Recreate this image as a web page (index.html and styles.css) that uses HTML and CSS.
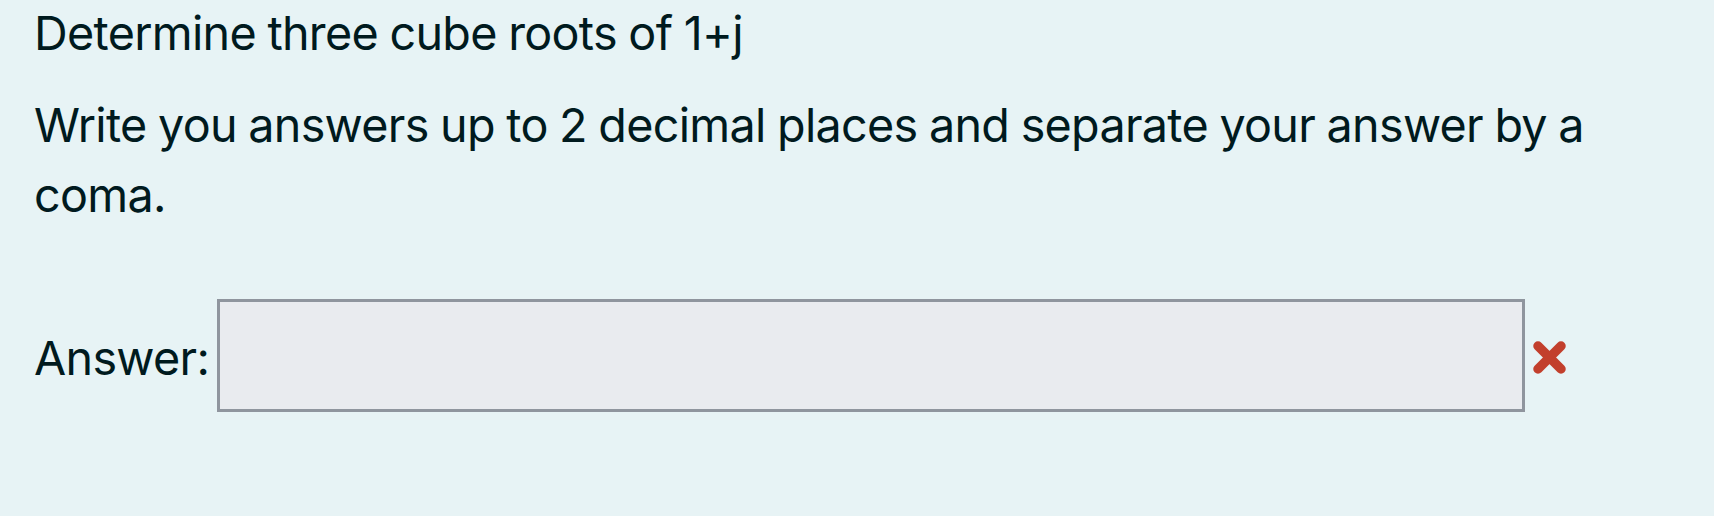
FILE: index.html
```html
<!DOCTYPE html>
<html lang="en">
<head>
<meta charset="utf-8">
<title>Question</title>
<link rel="stylesheet" href="styles.css">
</head>
<body>
<div class="formulation">
  <div class="qtext">
    <p class="q">Determine three cube roots of 1+j</p>
    <p class="q">Write you answers up to 2 decimal places and separate your answer by a coma.</p>
  </div>
  <div class="ablock">
    <label class="alabel" for="ans">Answer:</label>
    <input id="ans" class="answer" type="text" readonly>
    <svg class="xicon" width="33" height="33" viewBox="0 0 33 33" aria-hidden="true">
      <path d="M5 5 L28 28 M28 5 L5 28" stroke="#c23f2c" stroke-width="9.5" stroke-linecap="round" fill="none"/>
    </svg>
  </div>
</div>
</body>
</html>
```

FILE: styles.css
```css
html, body {
  margin: 0;
  padding: 0;
  background: #e7f3f5;
}
body {
  width: 1714px;
  height: 516px;
  overflow: hidden;
}
.formulation {
  background: #e7f3f5;
  color: #001a1e;
  font-family: Inter, "Noto Sans", sans-serif;
  font-size: 46.7px;
  line-height: 70px;
  letter-spacing: -0.7px;
  word-spacing: -1px;
  padding: 0 0 0 34px;
  margin-top: -2px;
}
.q {
  margin: 0 0 22px 0;
}
.qtext {
  width: 1580px;
}
.ablock {
  display: flex;
  align-items: flex-start;
  margin-top: 69px;
}
.alabel {
  margin-top: 24px;
  margin-right: 8px;
}
.answer {
  box-sizing: border-box;
  width: 1308px;
  height: 113px;
  border: 3px solid #8f959e;
  background: #e9ebef;
  margin: 0;
  padding: 0;
  outline: none;
}
.xicon {
  display: block;
  margin-left: 8px;
  margin-top: 42px;
}
```
